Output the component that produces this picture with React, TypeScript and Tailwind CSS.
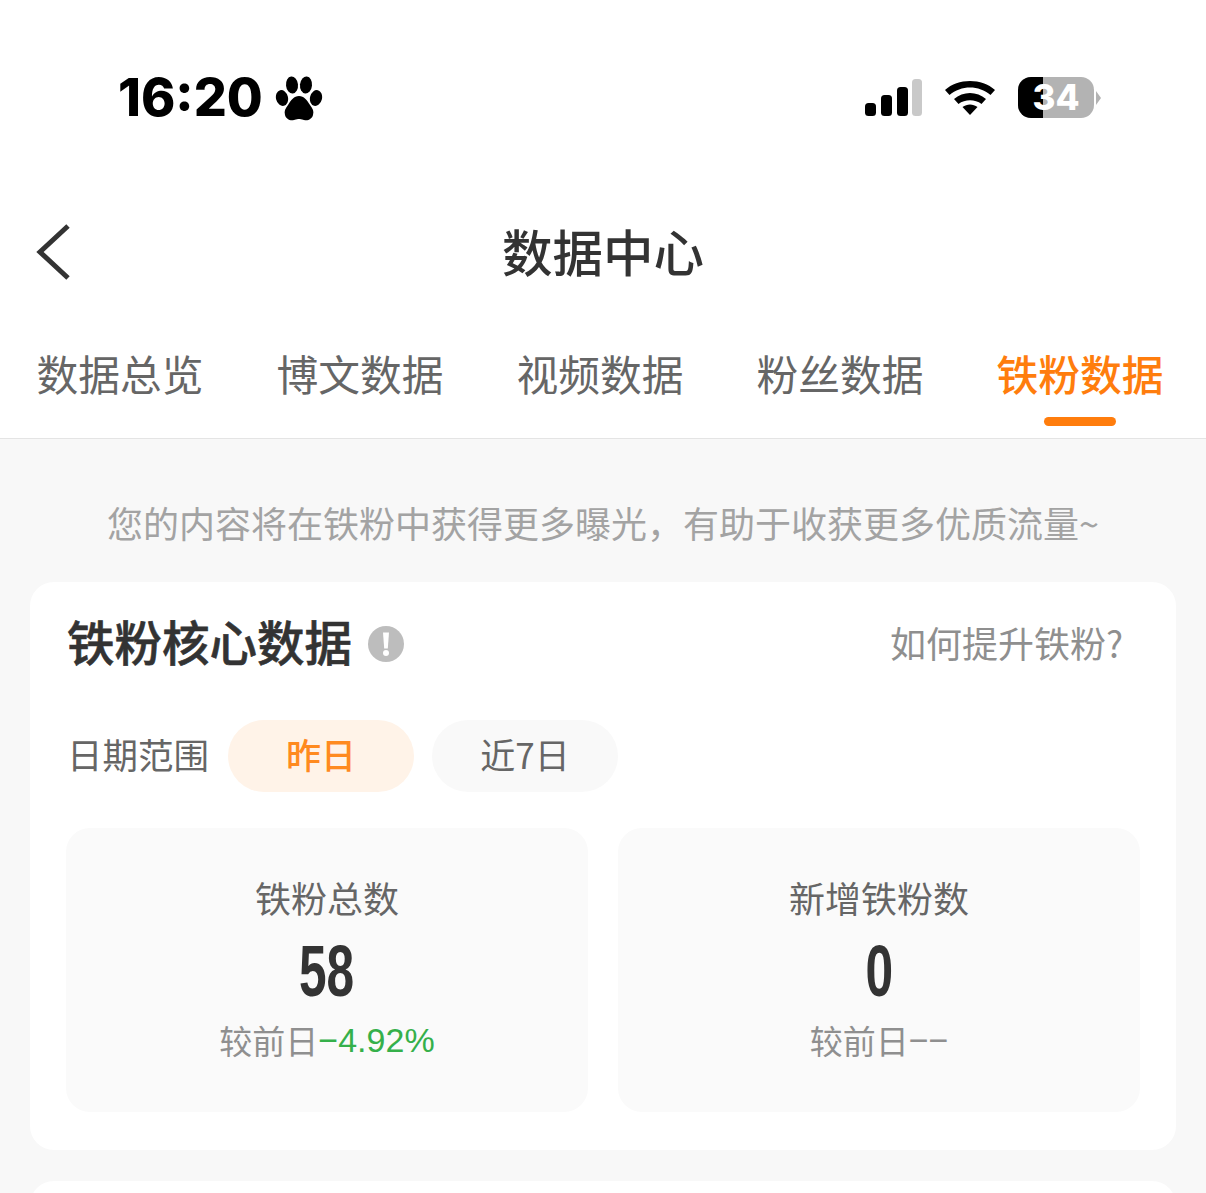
const cjk = "font-['Noto_Sans_CJK_SC','Liberation_Sans',sans-serif]";

const tabs = ["数据总览", "博文数据", "视频数据", "粉丝数据", "铁粉数据"];

function Paw() {
  return (
    <svg width="48" height="48" viewBox="0 0 48 48" fill="#000" className="mt-[2px] -ml-[1px]">
      <ellipse cx="7" cy="23" rx="6" ry="8" transform="rotate(-14 7 23)" />
      <ellipse cx="17" cy="10" rx="6" ry="8.5" transform="rotate(-6 17 10)" />
      <ellipse cx="31" cy="10" rx="6" ry="8.5" transform="rotate(6 31 10)" />
      <ellipse cx="41" cy="23" rx="6" ry="8" transform="rotate(14 41 23)" />
      <path d="M24 21c5 0 8 4 11 9 3 4 4 6 3 10-1 4-5 6-9 5-3-.7-3.500-1-5-1s-2 .3-5 1c-4 1-8-1-9-5-1-4 0-6 3-10 3-5 6-9 11-9z" />
    </svg>
  );
}

function StatusBar() {
  return (
    <div className="h-[190px] flex items-start justify-between pt-[70px] pl-[118px] pr-[105px] bg-white">
      <div className="flex items-center gap-[13px] h-[55px]">
        <span className="font-['Inter','Liberation_Sans',sans-serif] font-extrabold text-[52px] leading-none text-black">16:20</span>
        <Paw />
      </div>
      <div className="flex items-center h-[55px]">
        <svg width="60" height="40" viewBox="0 0 60 40" className="mr-[21px]">
          <rect x="2" y="25" width="11" height="13" rx="3.500" fill="#000" />
          <rect x="18" y="17" width="11" height="21" rx="3.500" fill="#000" />
          <rect x="34" y="9" width="11" height="29" rx="3.500" fill="#000" />
          <rect x="49" y="1" width="10" height="37" rx="3.500" fill="#c9c9c9" />
        </svg>
        <svg width="52" height="40" viewBox="0 0 52 40" className="mr-[22px] -mt-[1px]">
          <path d="M1 13C14 1 38 1 51 13l-4.500 5C35 8 17 8 5.500 18z" fill="#000" />
          <path d="M10 22c9-8 23-8 32 0l-4.500 5c-6.500-5-16.500-5-23 0z" fill="#000" />
          <path d="M18.500 30c4.500-3.500 10.500-3.500 15 0L26 38z" fill="#000" />
        </svg>
        <div className="relative w-[76px] h-[41px] -mt-[1px] rounded-[13px] overflow-hidden flex bg-[#b3b3b3]">
          <div className="w-[25px] h-full bg-black" />
          <span className="absolute inset-0 flex items-center justify-center font-['Inter','Liberation_Sans',sans-serif] font-extrabold text-[35px] leading-none text-white">34</span>
        </div>
        <div className="w-0 h-0 ml-[2px] border-y-[7px] border-y-transparent border-l-[5px] border-l-[#b3b3b3]" />
      </div>
    </div>
  );
}

function Header() {
  return (
    <div className="relative h-[128px] flex items-start justify-center bg-white">
      <svg width="36" height="60" viewBox="0 0 36 60" className="absolute left-[35px] top-[32px]" fill="none" stroke="#333" strokeWidth="5">
        <path d="M33 4L5 30l28 26" />
      </svg>
      <span className="text-[50.5px] leading-[120px] font-medium text-[#333]">数据中心</span>
    </div>
  );
}

function Tabs() {
  return (
    <div className="h-[121px] bg-white border-b border-[#e4e4e4] flex justify-between pl-[36.5px] pr-[42.5px]">
      {tabs.map((t, i) => (
        <div key={t} className="relative">
          <span className={i === 4 ? "block text-[41.75px] leading-[110px] font-medium text-[#ff7d0d]" : "block text-[41.75px] leading-[110px] text-[#666]"}>{t}</span>
          {i === 4 && <div className="absolute left-[47px] top-[99px] w-[72px] h-[9px] rounded-full bg-[#ff7d0d]" />}
        </div>
      ))}
    </div>
  );
}

function StatCard({ label, value, children }: { label: string; value: string; children: React.ReactNode }) {
  return (
    <div className="flex-1 h-[284px] rounded-[24px] bg-[#fafafa] flex flex-col items-center pt-[46px]">
      <div className="text-[36px] leading-[46px] text-[#666]">{label}</div>
      <div className="h-[80px] mt-[10px] flex items-center">
        <span className="inline-block scale-x-[0.68] font-['Liberation_Sans',sans-serif] font-bold text-[73px] leading-none text-[#333]">{value}</span>
      </div>
      <div className="flex items-center mt-[8px] text-[33px] leading-[44px] text-[#8f8f8f]">{children}</div>
    </div>
  );
}

export default function App() {
  return (
    <div className={`w-[1206px] h-[1193px] overflow-hidden bg-[#f8f8f8] ${cjk}`}>
      <StatusBar />
      <Header />
      <Tabs />
      <div className="h-[143px] flex items-center justify-center pt-[23px] text-[36px] text-[#a3a3a3] whitespace-nowrap">
        您的内容将在铁粉中获得更多曝光，有助于收获更多优质流量~
      </div>
      <div className="mx-[30px] h-[568px] rounded-[24px] bg-white px-[36px] pt-[30px]">
        <div className="flex items-center justify-between h-[64px] pl-[2px] pr-[18px]">
          <div className="flex items-center gap-[16px]">
            <span className="text-[47.5px] leading-none -mt-[6px] font-medium [-webkit-text-stroke:0.6px_#333] -ml-[1px] text-[#333]">铁粉核心数据</span>
            <svg width="36" height="36" viewBox="0 0 36 36">
              <circle cx="18" cy="18" r="18" fill="#bdbdbd" />
              <path d="M15 6.500h6l-1.200 16h-3.600z" fill="#fff" />
              <circle cx="18" cy="27" r="3" fill="#fff" />
            </svg>
          </div>
          <span className="text-[36px] leading-none -mt-[4px] -mr-[1px] text-[#8f8f8f]">如何提升铁粉?</span>
        </div>
        <div className="flex items-center mt-[44px] h-[72px] pl-[1px]">
          <span className="text-[35.5px] leading-none -mt-[4px] w-[161px] text-[#666] whitespace-nowrap">日期范围</span>
          <span className="w-[186px] h-[72px] rounded-full bg-[#fff3e8] flex items-center justify-center pb-[4px] text-[35px] font-medium text-[#ff8a1f]">昨日</span>
          <span className="w-[186px] h-[72px] ml-[18px] rounded-full bg-[#f9f9f9] flex items-center justify-center pb-[4px] text-[35px] text-[#666]">近7日</span>
        </div>
        <div className="flex gap-[30px] mt-[36px]">
          <StatCard label="铁粉总数" value="58">
            较前日<span className="font-['Liberation_Sans',sans-serif] text-[34px] text-[#35b04a]">−4.92%</span>
          </StatCard>
          <StatCard label="新增铁粉数" value="0">
            较前日<span className="font-['Liberation_Sans',sans-serif] text-[34px]">−−</span>
          </StatCard>
        </div>
      </div>
      <div className="mx-[30px] mt-[31px] h-[60px] rounded-[24px] bg-white" />
    </div>
  );
}
